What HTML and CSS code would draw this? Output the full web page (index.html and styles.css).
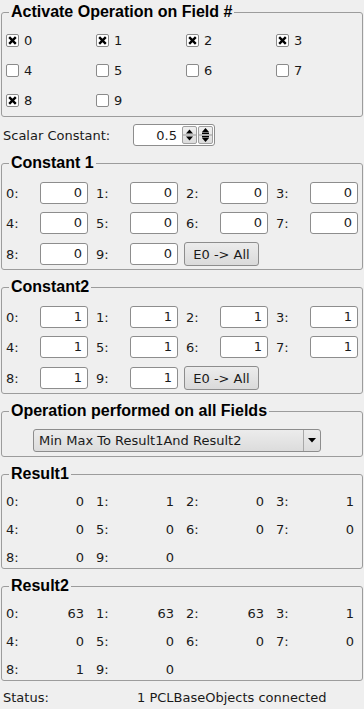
FILE: index.html
```html
<!DOCTYPE html>
<html lang="en">
<head>
    <meta charset="UTF-8">
    <meta name="viewport" content="width=device-width, initial-scale=1.0">
    <title>Field Operations</title>
    <link rel="stylesheet" href="styles.css">
</head>
<body>

<div class="panel">

    <!-- fields to operate on -->
    <fieldset class="group">
        <legend>Activate Operation on Field #</legend>
        <div class="check-grid">
            <label class="check"><span class="box"><svg viewBox="0 0 11 11" width="11" height="11"><path d="M2.2 2.2 L8.8 8.8 M8.8 2.2 L2.2 8.8" /></svg></span>0</label>
            <label class="check"><span class="box"><svg viewBox="0 0 11 11" width="11" height="11"><path d="M2.2 2.2 L8.8 8.8 M8.8 2.2 L2.2 8.8" /></svg></span>1</label>
            <label class="check"><span class="box"><svg viewBox="0 0 11 11" width="11" height="11"><path d="M2.2 2.2 L8.8 8.8 M8.8 2.2 L2.2 8.8" /></svg></span>2</label>
            <label class="check"><span class="box"><svg viewBox="0 0 11 11" width="11" height="11"><path d="M2.2 2.2 L8.8 8.8 M8.8 2.2 L2.2 8.8" /></svg></span>3</label>
            <label class="check"><span class="box"></span>4</label>
            <label class="check"><span class="box"></span>5</label>
            <label class="check"><span class="box"></span>6</label>
            <label class="check"><span class="box"></span>7</label>
            <label class="check"><span class="box"><svg viewBox="0 0 11 11" width="11" height="11"><path d="M2.2 2.2 L8.8 8.8 M8.8 2.2 L2.2 8.8" /></svg></span>8</label>
            <label class="check"><span class="box"></span>9</label>
        </div>
    </fieldset>

    <!-- scalar -->
    <div class="scalar-row">
        <span class="scalar-label">Scalar Constant:</span>
        <div class="spinbox">
            <span class="spin-value">0.5</span>
            <span class="spin-btn">
                <svg viewBox="0 0 15 18" width="15" height="18">
                    <path d="M4 7.5 L11 7.5 L7.5 3.5 Z" />
                    <rect x="1" y="8.5" width="13" height="1" class="sep" />
                    <path d="M4 10.5 L11 10.5 L7.5 14.5 Z" />
                </svg>
            </span>
            <span class="spin-btn">
                <svg viewBox="0 0 15 18" width="15" height="18">
                    <path d="M4 6 L11 6 L7.5 2 Z" />
                    <rect x="4" y="6.5" width="7" height="1.6" />
                    <rect x="1" y="8.5" width="13" height="1" class="sep" />
                    <rect x="4" y="9.9" width="7" height="1.6" />
                    <path d="M4 12 L11 12 L7.5 16 Z" />
                </svg>
            </span>
        </div>
    </div>

    <!-- constant 1 -->
    <fieldset class="group">
        <legend>Constant 1</legend>
        <div class="value-grid">
            <div class="pair"><span class="pair-label">0:</span><span class="input">0</span></div>
            <div class="pair"><span class="pair-label">1:</span><span class="input">0</span></div>
            <div class="pair"><span class="pair-label">2:</span><span class="input">0</span></div>
            <div class="pair"><span class="pair-label">3:</span><span class="input">0</span></div>
            <div class="pair"><span class="pair-label">4:</span><span class="input">0</span></div>
            <div class="pair"><span class="pair-label">5:</span><span class="input">0</span></div>
            <div class="pair"><span class="pair-label">6:</span><span class="input">0</span></div>
            <div class="pair"><span class="pair-label">7:</span><span class="input">0</span></div>
            <div class="pair"><span class="pair-label">8:</span><span class="input">0</span></div>
            <div class="pair"><span class="pair-label">9:</span><span class="input">0</span></div>
            <div class="pair"><button class="push-btn">E0 -&gt; All</button></div>
        </div>
    </fieldset>

    <!-- constant 2 -->
    <fieldset class="group">
        <legend>Constant2</legend>
        <div class="value-grid">
            <div class="pair"><span class="pair-label">0:</span><span class="input">1</span></div>
            <div class="pair"><span class="pair-label">1:</span><span class="input">1</span></div>
            <div class="pair"><span class="pair-label">2:</span><span class="input">1</span></div>
            <div class="pair"><span class="pair-label">3:</span><span class="input">1</span></div>
            <div class="pair"><span class="pair-label">4:</span><span class="input">1</span></div>
            <div class="pair"><span class="pair-label">5:</span><span class="input">1</span></div>
            <div class="pair"><span class="pair-label">6:</span><span class="input">1</span></div>
            <div class="pair"><span class="pair-label">7:</span><span class="input">1</span></div>
            <div class="pair"><span class="pair-label">8:</span><span class="input">1</span></div>
            <div class="pair"><span class="pair-label">9:</span><span class="input">1</span></div>
            <div class="pair"><button class="push-btn">E0 -&gt; All</button></div>
        </div>
    </fieldset>

    <!-- operation -->
    <fieldset class="group op-group">
        <legend>Operation performed on all Fields</legend>
        <div class="combo">
            <span class="combo-text">Min Max To Result1And Result2</span>
            <span class="combo-arrow"><svg viewBox="0 0 8 5" width="8" height="5"><path d="M0 0 L8 0 L4 4.5 Z" /></svg></span>
        </div>
    </fieldset>

    <!-- results -->
    <fieldset class="group">
        <legend>Result1</legend>
        <div class="result-grid">
            <div class="pair"><span class="pair-label">0:</span><span class="result">0</span></div>
            <div class="pair"><span class="pair-label">1:</span><span class="result">1</span></div>
            <div class="pair"><span class="pair-label">2:</span><span class="result">0</span></div>
            <div class="pair"><span class="pair-label">3:</span><span class="result">1</span></div>
            <div class="pair"><span class="pair-label">4:</span><span class="result">0</span></div>
            <div class="pair"><span class="pair-label">5:</span><span class="result">0</span></div>
            <div class="pair"><span class="pair-label">6:</span><span class="result">0</span></div>
            <div class="pair"><span class="pair-label">7:</span><span class="result">0</span></div>
            <div class="pair"><span class="pair-label">8:</span><span class="result">0</span></div>
            <div class="pair"><span class="pair-label">9:</span><span class="result">0</span></div>
        </div>
    </fieldset>

    <fieldset class="group">
        <legend>Result2</legend>
        <div class="result-grid">
            <div class="pair"><span class="pair-label">0:</span><span class="result">63</span></div>
            <div class="pair"><span class="pair-label">1:</span><span class="result">63</span></div>
            <div class="pair"><span class="pair-label">2:</span><span class="result">63</span></div>
            <div class="pair"><span class="pair-label">3:</span><span class="result">1</span></div>
            <div class="pair"><span class="pair-label">4:</span><span class="result">0</span></div>
            <div class="pair"><span class="pair-label">5:</span><span class="result">0</span></div>
            <div class="pair"><span class="pair-label">6:</span><span class="result">0</span></div>
            <div class="pair"><span class="pair-label">7:</span><span class="result">0</span></div>
            <div class="pair"><span class="pair-label">8:</span><span class="result">1</span></div>
            <div class="pair"><span class="pair-label">9:</span><span class="result">0</span></div>
        </div>
    </fieldset>

    <!-- status -->
    <div class="status-row">
        <span class="status-label">Status:</span>
        <span class="status-text">1 PCLBaseObjects connected</span>
    </div>

</div>

</body>
</html>
```

FILE: styles.css
```css
body {
    margin: 0;
    background-color: #efefef;
    font-family: "DejaVu Sans", sans-serif;
    font-size: 13px;
    color: #1a1a1a;
}
.panel {
    display: flex;
    flex-direction: column;
    gap: 8px;
    padding-top: 3px;
}
.group {
    margin: 0 1px;
    padding: 0 4px;
    min-width: 0;
    border: 1px solid #9c9c9c;
    border-radius: 3px;
}
.group legend {
    margin-left: 3px;
    padding: 0 2px;
    font-family: "Liberation Sans", Arial, sans-serif;
    font-weight: bold;
    font-size: 16px;
    line-height: 18px;
    color: #000;
}

/* checkboxes */
.check-grid {
    display: grid;
    grid-template-columns: repeat(4, 90px);
    grid-auto-rows: 30px;
    padding: 4px 0 1px;
}
.check {
    display: flex;
    align-items: center;
}
.box {
    width: 11px;
    height: 11px;
    border: 1px solid #8a8a8a;
    border-radius: 2px;
    background-color: #fff;
    margin-right: 5px;
    display: flex;
}
.box svg path {
    stroke: #000;
    stroke-width: 2.4;
}

/* scalar */
.scalar-row {
    display: flex;
    align-items: center;
    margin-top: -1px;
    padding-left: 3px;
    height: 22px;
}
.scalar-label {
    width: 130px;
}
.spinbox {
    display: flex;
    align-items: center;
    width: 80px;
    height: 20px;
    border: 1px solid #8d8d8d;
    border-radius: 3px;
    background-color: #fff;
}
.spin-value {
    flex: 1;
    text-align: right;
    padding-right: 5px;
}
.spin-btn {
    width: 15px;
    height: 18px;
    margin-right: 1px;
    border: 1px solid #a0a0a0;
    border-radius: 2px;
    background: linear-gradient(#f0f0f0, #dcdcdc);
    display: flex;
    box-sizing: border-box;
}
.spin-btn svg {
    margin: -1px;
}
.spin-btn svg .sep {
    fill: #9a9a9a;
}

/* value grids */
.value-grid {
    display: grid;
    grid-template-columns: repeat(4, 82px);
    column-gap: 8px;
    row-gap: 8px;
    padding: 10px 0 3px;
}
.pair {
    display: flex;
    align-items: center;
}
.pair-label {
    width: 34px;
}
.input {
    width: 41px;
    height: 20px;
    line-height: 20px;
    padding-right: 5px;
    border: 1px solid #8d8d8d;
    border-radius: 3px;
    background-color: #fff;
    text-align: right;
}
.push-btn {
    margin-left: -2px;
    width: 75px;
    height: 24px;
    border: 1px solid #8d8d8d;
    border-radius: 3px;
    background: linear-gradient(#ececec, #dadada);
    font-family: "DejaVu Sans", sans-serif;
    font-size: 13px;
    color: #1a1a1a;
    padding: 0;
}

/* combo */
.op-group {
    padding-top: 9px;
    padding-bottom: 4px;
}
.combo {
    display: flex;
    align-items: center;
    margin-left: 27px;
    width: 286px;
    height: 21px;
    border: 1px solid #8d8d8d;
    border-radius: 3px;
    background: linear-gradient(#ececec, #dcdcdc);
}
.combo-text {
    flex: 1;
    padding-left: 5px;
}
.combo-arrow {
    width: 16px;
    height: 21px;
    border-left: 1px solid #a8a8a8;
    display: flex;
    align-items: center;
    justify-content: center;
}

/* results */
.result-grid {
    display: grid;
    grid-template-columns: repeat(4, 82px);
    column-gap: 8px;
    grid-auto-rows: 20px;
    row-gap: 8px;
    padding: 8px 0 1px;
}
.result {
    width: 44px;
    padding-right: 4px;
    text-align: right;
}

/* status */
.status-row {
    display: flex;
    align-items: center;
    height: 22px;
    margin-top: -3px;
    padding-left: 3px;
}
.status-label {
    width: 134px;
}
```
